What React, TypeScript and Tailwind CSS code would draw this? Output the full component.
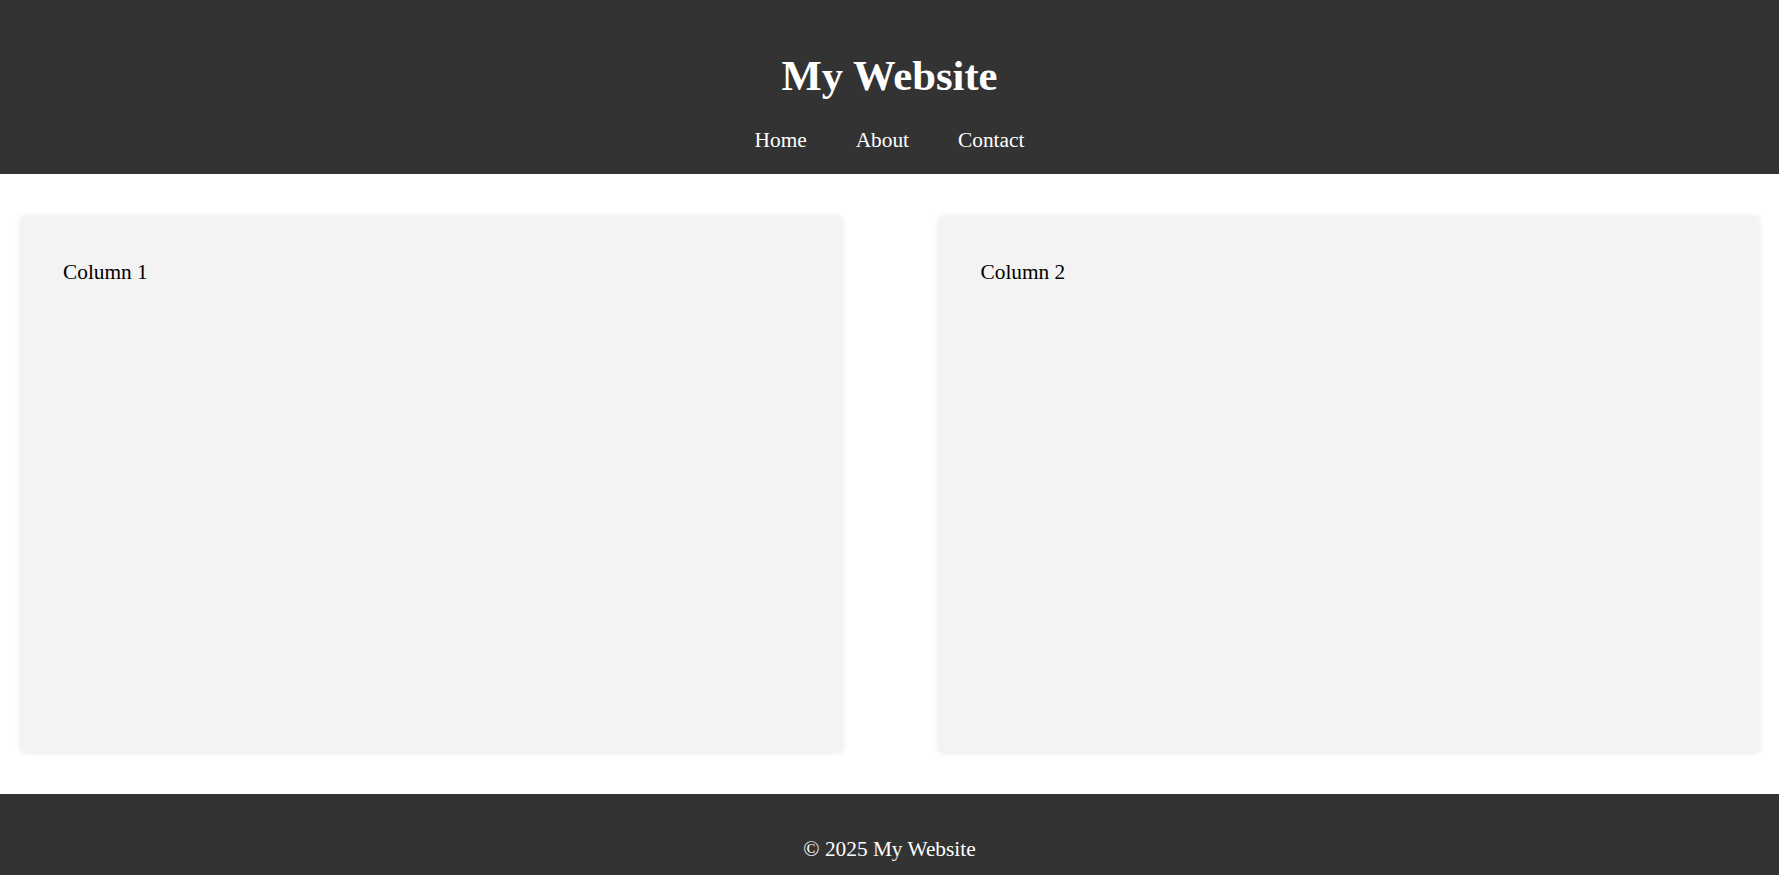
const navLinks = ["Home", "About", "Contact"];

const App = () => {
  return (
    <div className="min-h-screen bg-white font-['Liberation_Serif','Times_New_Roman',serif] text-black">
      <header className="h-[174px] bg-[#333333] text-white text-center pt-[52px]">
        <h1 className="text-[42.67px] leading-[48px] font-bold">My Website</h1>
        <nav className="mt-[28px] flex justify-center gap-[49px] text-[21.33px] leading-[24px]">
          {navLinks.map((link) => (
            <a key={link} href="#" className="text-white">
              {link}
            </a>
          ))}
        </nav>
      </header>

      <main className="grid grid-cols-2 gap-[97px] pl-[21px] pr-[20px] pt-[43px] pb-[42px]">
        <div className="h-[535px] rounded-[2px] bg-[#f3f3f3] pl-[42px] pt-[43px] text-[21.33px] leading-[24px] shadow-[0_0_6px_rgba(0,0,0,0.11)]">
          Column 1
        </div>
        <div className="h-[535px] rounded-[2px] bg-[#f3f3f3] pl-[42px] pt-[43px] text-[21.33px] leading-[24px] shadow-[0_0_6px_rgba(0,0,0,0.11)]">
          Column 2
        </div>
      </main>

      <footer className="h-[110px] bg-[#333333] text-white text-center pt-[43px] text-[21.33px] leading-[24px]">
        © 2025 My Website
      </footer>
    </div>
  );
};

export default App;
